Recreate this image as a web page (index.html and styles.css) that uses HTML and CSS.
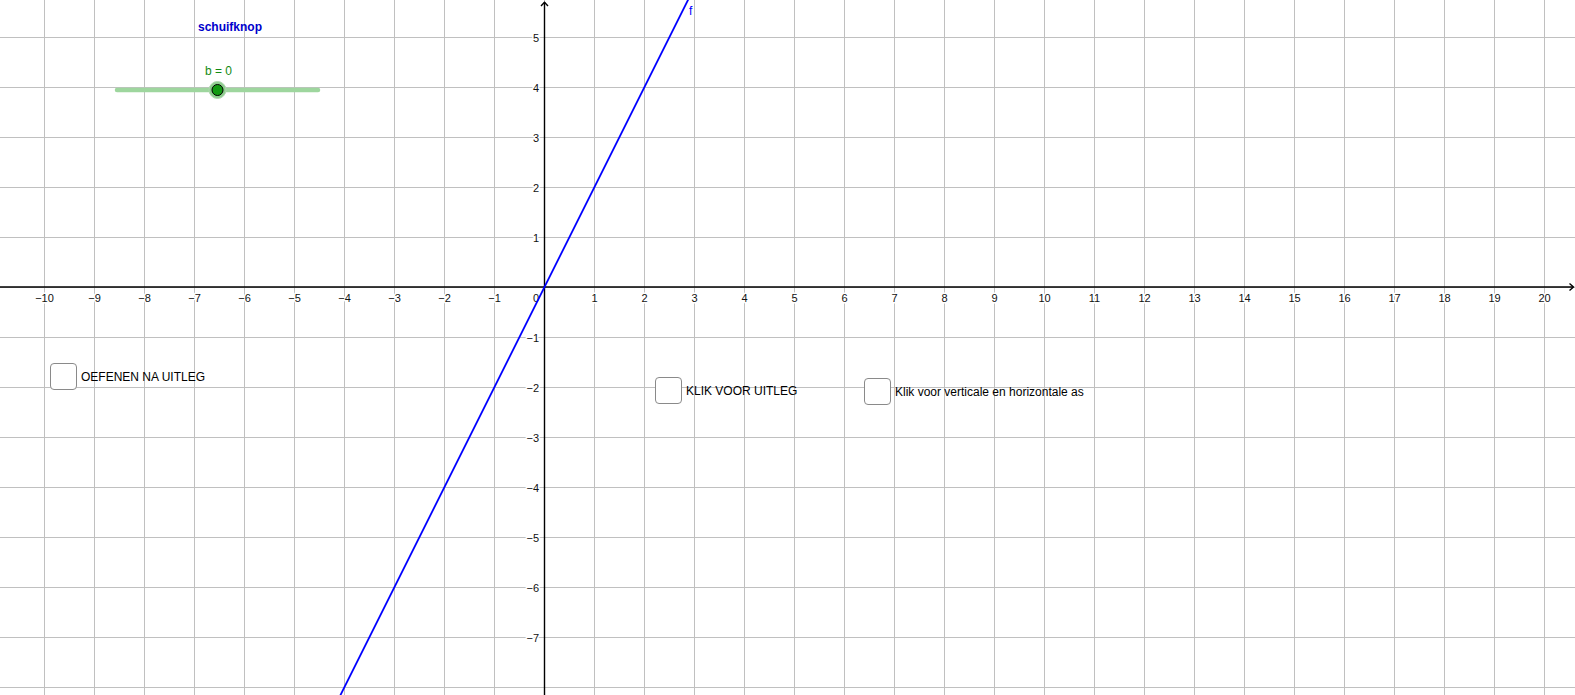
FILE: index.html
```html
<!DOCTYPE html>
<html lang="nl">
<head>
<meta charset="utf-8">
<title>GeoGebra – schuifknop</title>
<link rel="stylesheet" href="styles.css">
</head>
<body>
<div class="canvas">
  <svg class="plane" width="1575" height="695" viewBox="0 0 1575 695" xmlns="http://www.w3.org/2000/svg">
    <defs>
      <pattern id="grid" x="44" y="37" width="50" height="50" patternUnits="userSpaceOnUse">
        <path class="grid-line" d="M0.5 0 V50 M0 0.5 H50"/>
      </pattern>
    </defs>
    <rect class="grid-fill" x="0" y="0" width="1575" height="695"/>

    <!-- axes -->
    <path class="axis" d="M0 287 H1573"/>
    <path class="axis" d="M1569.5 283.5 L1573.5 287 L1569.5 290.5"/>
    <path class="axis" d="M544.5 2 V695"/>
    <path class="axis" d="M541 6 L544.5 2.2 L548 6"/>

    <!-- x-axis labels -->
    <g class="tick-label x-labels">
      <text x="44.5" y="302">−10</text>
      <text x="94.5" y="302">−9</text>
      <text x="144.5" y="302">−8</text>
      <text x="194.5" y="302">−7</text>
      <text x="244.5" y="302">−6</text>
      <text x="294.5" y="302">−5</text>
      <text x="344.5" y="302">−4</text>
      <text x="394.5" y="302">−3</text>
      <text x="444.5" y="302">−2</text>
      <text x="494.5" y="302">−1</text>
      <text x="594.5" y="302">1</text>
      <text x="644.5" y="302">2</text>
      <text x="694.5" y="302">3</text>
      <text x="744.5" y="302">4</text>
      <text x="794.5" y="302">5</text>
      <text x="844.5" y="302">6</text>
      <text x="894.5" y="302">7</text>
      <text x="944.5" y="302">8</text>
      <text x="994.5" y="302">9</text>
      <text x="1044.5" y="302">10</text>
      <text x="1094.5" y="302">11</text>
      <text x="1144.5" y="302">12</text>
      <text x="1194.5" y="302">13</text>
      <text x="1244.5" y="302">14</text>
      <text x="1294.5" y="302">15</text>
      <text x="1344.5" y="302">16</text>
      <text x="1394.5" y="302">17</text>
      <text x="1444.5" y="302">18</text>
      <text x="1494.5" y="302">19</text>
      <text x="1544.5" y="302">20</text>
    </g>

    <!-- y-axis labels -->
    <g class="tick-label y-labels">
      <text x="539" y="41.5">5</text>
      <text x="539" y="91.5">4</text>
      <text x="539" y="141.5">3</text>
      <text x="539" y="191.5">2</text>
      <text x="539" y="241.5">1</text>
      <text x="539" y="302">0</text>
      <text x="539" y="341.5">−1</text>
      <text x="539" y="391.5">−2</text>
      <text x="539" y="441.5">−3</text>
      <text x="539" y="491.5">−4</text>
      <text x="539" y="541.5">−5</text>
      <text x="539" y="591.5">−6</text>
      <text x="539" y="641.5">−7</text>
    </g>

    <!-- function f(x) = 2x -->
    <path class="func" d="M333 710 L692 -8"/>
    <text class="func-label" x="689" y="15">f</text>

    <!-- slider -->
    <text class="slider-title" x="198" y="31">schuifknop</text>
    <text class="slider-value" x="205" y="74.5">b = 0</text>
    <path class="slider-track" d="M117 90 H318"/>
    <circle class="slider-halo" cx="217.5" cy="90" r="8.5"/>
    <circle class="slider-knob" cx="217.5" cy="90" r="5.5"/>
  </svg>

  <label class="check check-oefenen"><span class="check-box"></span><span class="check-text">OEFENEN NA UITLEG</span></label>
  <label class="check check-uitleg"><span class="check-box"></span><span class="check-text">KLIK VOOR UITLEG</span></label>
  <label class="check check-assen"><span class="check-box"></span><span class="check-text">Klik voor verticale en horizontale as</span></label>
</div>
</body>
</html>
```

FILE: styles.css
```css
html, body {
  margin: 0;
  padding: 0;
  background: #ffffff;
  overflow: hidden;
}

.canvas {
  position: relative;
  width: 1575px;
  height: 695px;
  font-family: "Liberation Sans", Arial, sans-serif;
}

.plane {
  display: block;
}

.grid-fill {
  fill: url(#grid);
}

.grid-line {
  fill: none;
  stroke: #c0c0c0;
  stroke-width: 1;
  shape-rendering: crispEdges;
}

.axis {
  fill: none;
  stroke: #000000;
  stroke-width: 1.4;
}

.tick-label {
  font-family: "Liberation Sans", Arial, sans-serif;
  font-size: 11px;
  fill: #111111;
  stroke: #ffffff;
  stroke-width: 3px;
  stroke-linejoin: round;
  paint-order: stroke;
}

.x-labels {
  text-anchor: middle;
}

.y-labels {
  text-anchor: end;
}

.func {
  fill: none;
  stroke: #0000ff;
  stroke-width: 1.8;
}

.func-label {
  font-family: "Liberation Sans", Arial, sans-serif;
  font-size: 12px;
  fill: #0000ff;
}

.slider-title {
  font-family: "Liberation Sans", Arial, sans-serif;
  font-size: 12px;
  font-weight: bold;
  fill: #0000cc;
}

.slider-value {
  font-family: "Liberation Sans", Arial, sans-serif;
  font-size: 12px;
  fill: #138a13;
}

.slider-track {
  fill: none;
  stroke: #9ed69e;
  stroke-width: 4.5;
  stroke-linecap: round;
}

.slider-halo {
  fill: #8fcc8f;
  stroke: #b0d8b0;
  stroke-width: 1;
}

.slider-knob {
  fill: #139a13;
  stroke: #000000;
  stroke-width: 1;
}

.check {
  position: absolute;
  display: flex;
  align-items: center;
  gap: 4px;
  font-family: "Liberation Sans", Arial, sans-serif;
  font-size: 12px;
  line-height: 14px;
  color: #000000;
  white-space: nowrap;
}

.check-box {
  display: block;
  width: 27px;
  height: 27px;
  box-sizing: border-box;
  border: 1.5px solid #8a8a8a;
  border-radius: 4px;
  background: #ffffff;
}

.check-oefenen {
  left: 50px;
  top: 363px;
}

.check-uitleg {
  left: 655px;
  top: 377px;
}

.check-assen {
  left: 864px;
  top: 378px;
}
```
